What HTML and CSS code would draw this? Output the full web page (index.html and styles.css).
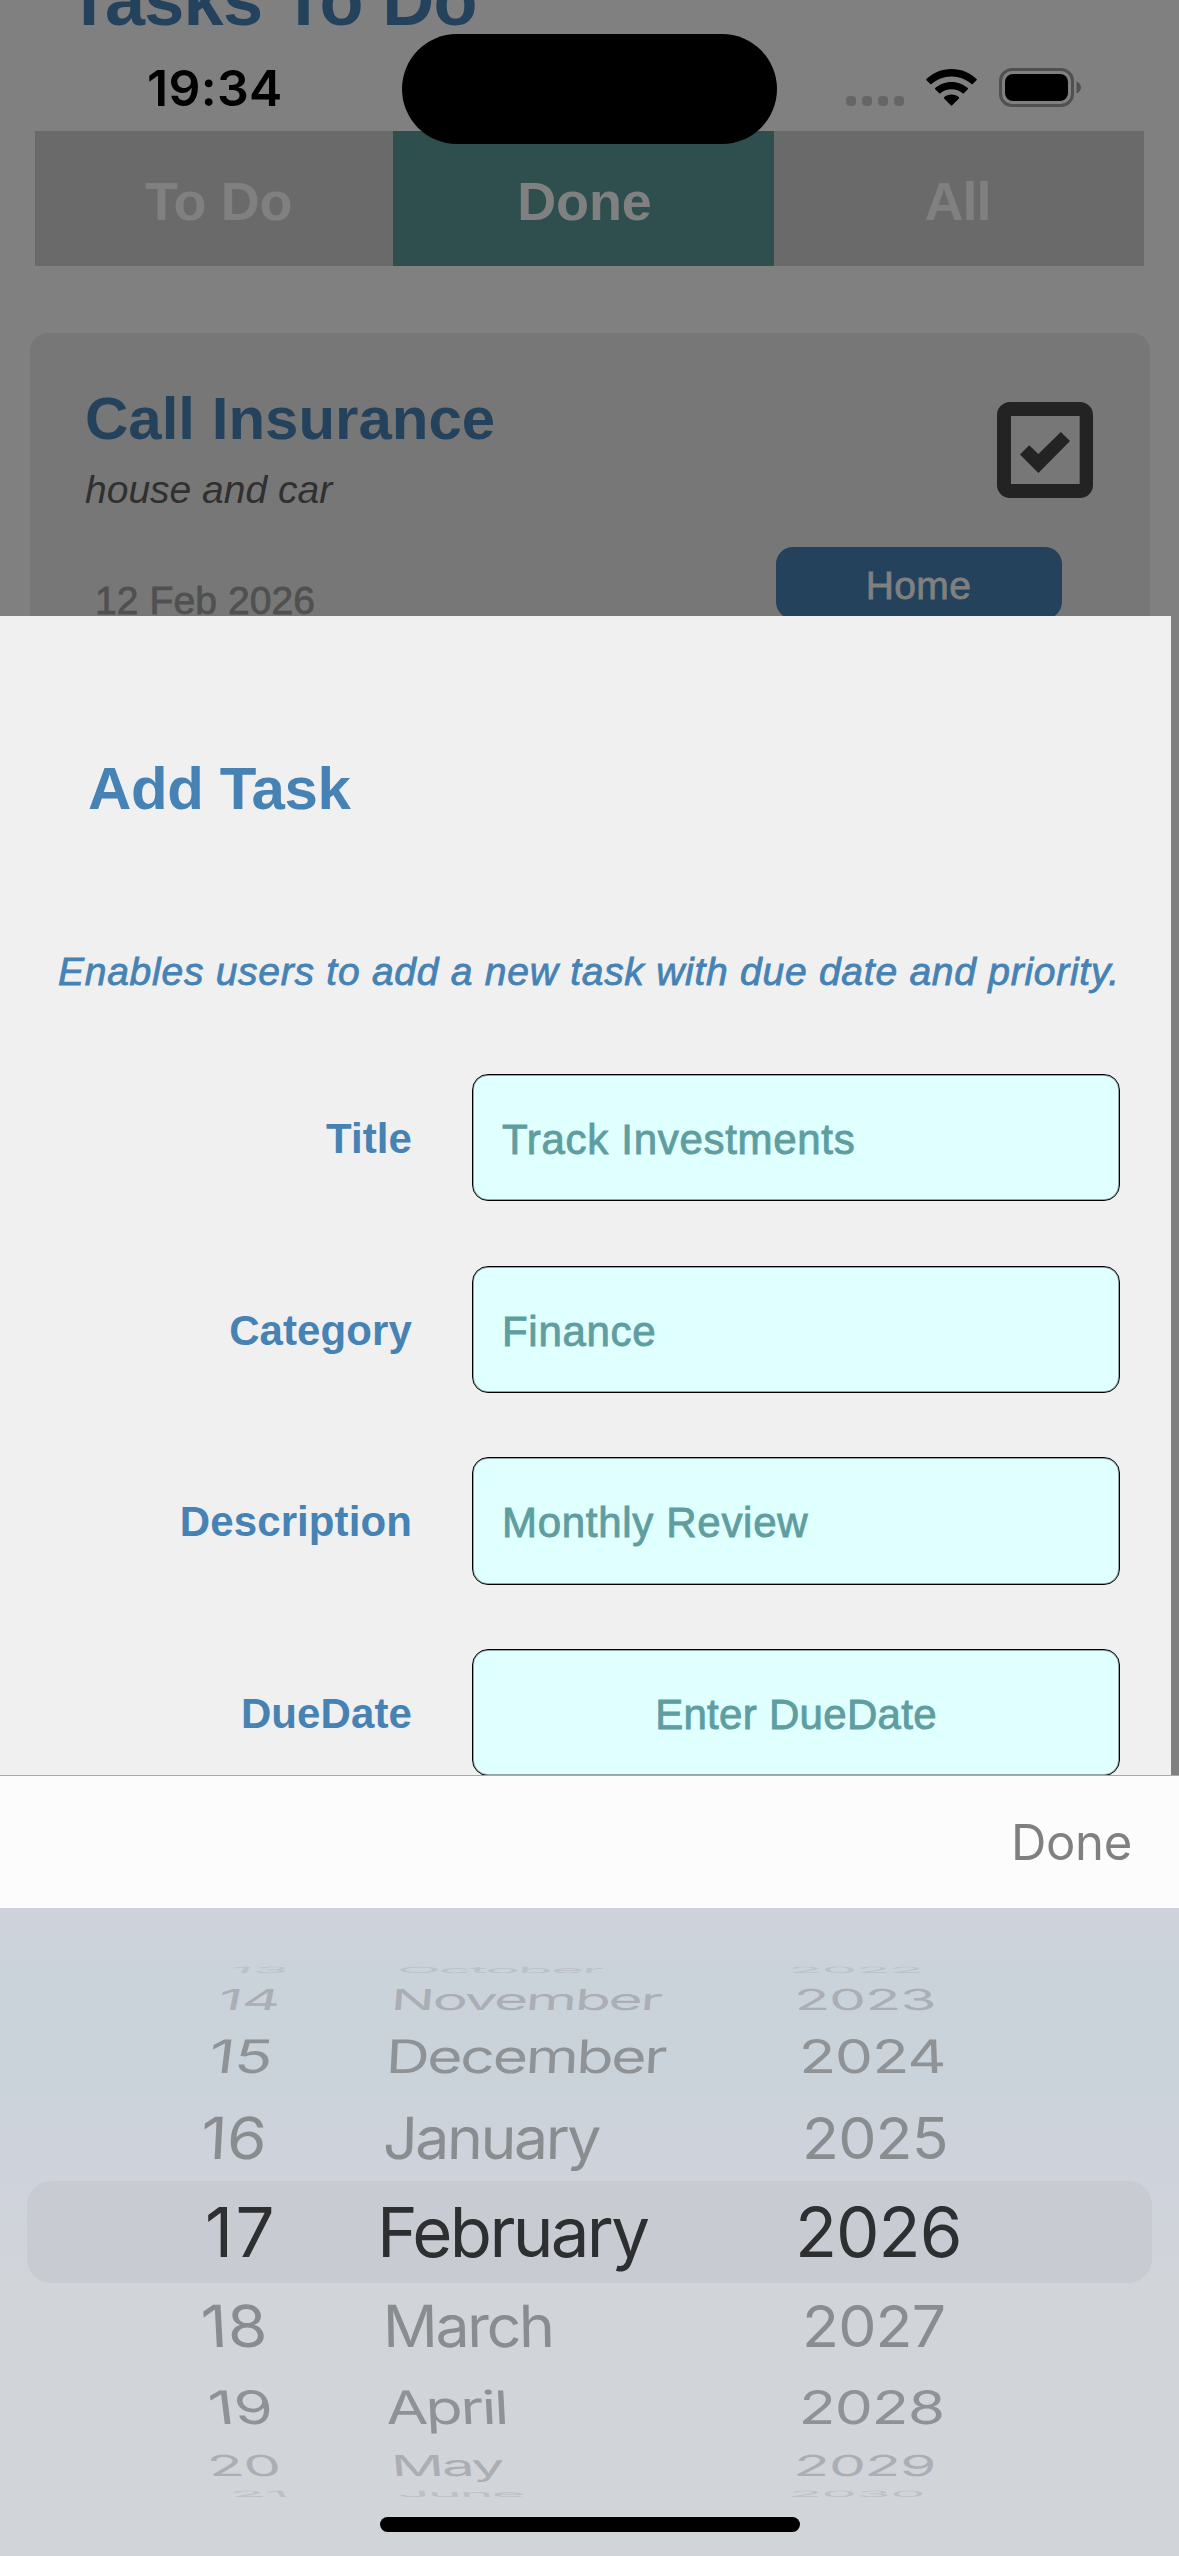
FILE: index.html
```html
<!DOCTYPE html>
<html lang="en">
<head>
<meta charset="utf-8">
<title>Add Task</title>
<link rel="stylesheet" href="styles.css">
</head>
<body>
<div class="screen">
  <header class="status">
    <span class="status-time">19:34</span>
    <span class="island"></span>
    <span class="status-icons">
      <span class="signal"><i></i><i></i><i></i><i></i></span>
      <svg class="wifi" width="51" height="37" viewBox="0 0 51 37">
        <path d="M25.5 0C35.500 0 44.500 3.900 50.600 10.100Q51.100 10.700 50.500 11.300L46.700 15.100Q46.200 15.600 45.600 15.100C40.400 10.400 33.400 7.500 25.500 7.500S10.600 10.400 5.400 15.100Q4.800 15.600 4.300 15.100L.5 11.300Q-.1 10.700.4 10.100C6.500 3.900 15.500 0 25.500 0Z"/>
        <path d="M25.500 12.900C32 12.900 37.600 15.300 41.800 19.100Q42.400 19.700 41.800 20.300L37.800 24.300Q37.200 24.800 36.600 24.300C33.600 21.800 29.800 20.300 25.500 20.300S17.400 21.800 14.400 24.300Q13.800 24.800 13.200 24.300L9.200 20.300Q8.600 19.700 9.200 19.100C13.400 15.300 19 12.900 25.500 12.900Z"/>
        <path d="M25.500 25.600C28.500 25.600 31 26.600 32.900 28.200Q33.500 28.800 32.900 29.400L26.200 36.200Q25.500 36.900 24.800 36.200L18.100 29.400Q17.500 28.800 18.100 28.200C20 26.600 22.500 25.600 25.500 25.600Z"/>
      </svg>
      <svg class="battery" width="82" height="39" viewBox="0 0 82 39">
        <rect x="1.500" y="1.500" width="72" height="36" rx="11.500" fill="none" stroke="#505050" stroke-width="3"/>
        <rect x="6" y="6" width="63" height="27" rx="8"/>
        <path d="M77.500 13.500C80.300 14.700 82 17 82 19.500S80.300 24.300 77.500 25.500Z" fill="#505050"/>
      </svg>
    </span>
  </header>

  <main class="tasks">
    <h1 class="tasks-title">Tasks To Do</h1>
    <nav class="tabs">
      <span class="tab tab-todo">To Do</span>
      <span class="tab tab-active">Done</span>
      <span class="tab tab-all">All</span>
    </nav>
    <article class="card">
      <div class="card-text">
        <h2 class="card-title">Call Insurance</h2>
        <p class="card-note">house and car</p>
        <p class="card-date">12 Feb 2026</p>
      </div>
      <div class="card-side">
        <svg class="check" width="96" height="96" viewBox="0 0 96 96">
          <path fill-rule="evenodd" d="M13 0H83A13 13 0 0 1 96 13V83A13 13 0 0 1 83 96H13A13 13 0 0 1 0 83V13A13 13 0 0 1 13 0ZM14 14V82H82.700V14Z"/>
          <path d="M23 52.500L32.200 43.300L41.400 52L63.800 30L73 39L41.400 71Z"/>
        </svg>
        <span class="tag">Home</span>
      </div>
    </article>
  </main>

  <section class="sheet">
    <h2 class="sheet-title">Add Task</h2>
    <p class="sheet-hint">Enables users to add a new task with due date and priority.</p>
    <div class="form">
      <div class="row"><span class="label">Title</span><span class="field">Track Investments</span></div>
      <div class="row"><span class="label">Category</span><span class="field">Finance</span></div>
      <div class="row"><span class="label">Description</span><span class="field">Monthly Review</span></div>
      <div class="row"><span class="label">DueDate</span><span class="field field-center">Enter DueDate</span></div>
    </div>
  </section>

  <div class="toolbar"><span class="toolbar-done">Done</span></div>

  <section class="picker">
    <div class="line up far4"><span class="day">13</span><span class="month">October</span><span class="year">2022</span></div>
    <div class="line up far3"><span class="day">14</span><span class="month">November</span><span class="year">2023</span></div>
    <div class="line up far2"><span class="day">15</span><span class="month">December</span><span class="year">2024</span></div>
    <div class="line up far1"><span class="day">16</span><span class="month">January</span><span class="year">2025</span></div>
    <div class="line current"><span class="day">17</span><span class="month">February</span><span class="year">2026</span></div>
    <div class="line down far1"><span class="day">18</span><span class="month">March</span><span class="year">2027</span></div>
    <div class="line down far2"><span class="day">19</span><span class="month">April</span><span class="year">2028</span></div>
    <div class="line down far3"><span class="day">20</span><span class="month">May</span><span class="year">2029</span></div>
    <div class="line down far4"><span class="day">21</span><span class="month">June</span><span class="year">2030</span></div>
  </section>
  <span class="home-bar"></span>
</div>
</body>
</html>
```
FILE: styles.css
```css
* { box-sizing: border-box; margin: 0; padding: 0; }
body { width: 1179px; background: #808080; font-family: "Liberation Sans", Arial, sans-serif; }
.screen { position: relative; width: 1179px; height: 2556px; overflow: hidden; background: #808080; }

/* status bar floats above the dimmed list */
.status { position: absolute; z-index: 2; top: 34px; left: 0; width: 1179px; height: 110px; display: grid; grid-template-columns: 402px 375px 402px; }
.status-time { padding-left: 147px; font: 600 50px/108px Inter, sans-serif; letter-spacing: 0.3px; color: #000; }
.island { background: #000; border-radius: 55px; }
.status-icons { display: flex; padding-left: 69px; }
.signal { display: flex; gap: 6px; padding-top: 62px; width: 80px; }
.signal i { width: 10px; height: 10px; border-radius: 4px; background: #666; }
.wifi { margin-top: 35px; }
.battery { margin: 34px 0 0 22px; }

.tasks { height: 616px; overflow: hidden; display: flow-root; }
.tasks-title { margin: -40px 0 91px; padding-left: 67px; font-size: 72px; line-height: 80px; letter-spacing: -0.7px; color: #24425c; }
.tabs { display: grid; grid-template-columns: 358px 381px 370px; margin-left: 35px; height: 135px; }
.tab { padding-top: 6px; background: #6a6a6a; color: #808080; font-size: 54px; font-weight: 700; line-height: 129px; text-align: center; }
.tab-todo { padding-left: 9px; letter-spacing: -0.4px; }
.tab-active { background: #2f4f4f; padding-left: 2px; letter-spacing: -0.1px; }
.tab-all { padding-right: 3px; letter-spacing: -1px; }

.card { display: flex; justify-content: space-between; margin: 67px 29.5px 0; height: 300px; border-radius: 18px; background: #777; }
.card-text { padding: 51px 0 0 55.500px; }
.card-title { font-size: 60px; line-height: 70px; color: #24425c; }
.card-note { margin-top: 13px; font-size: 39px; line-height: 46px; font-style: italic; color: #303030; }
.card-date { margin-top: 65px; padding-left: 10px; font-size: 39px; line-height: 46px; letter-spacing: 0.1px; color: #505050; -webkit-text-stroke: 0.8px #505050; }
.card-side { display: flex; flex-direction: column; align-items: flex-end; padding-top: 69px; }
.check { margin-right: 56.500px; fill: #232323; }
.tag { margin: 49px 88px 0 0; width: 286px; height: 72px; padding-top: 5px; border-radius: 17px; background: #24425c; color: #808080; font-size: 39px; line-height: 67px; letter-spacing: 0.4px; text-align: center; -webkit-text-stroke: 0.8px #808080; }

.sheet { width: 1171px; height: 1159px; overflow: hidden; padding-top: 138px; background: #f0f0f0; }
.sheet-title { padding-left: 88px; font-size: 60px; line-height: 70px; letter-spacing: -0.4px; color: #4682b4; }
.sheet-hint { margin-top: 125px; padding-left: 58px; font-size: 39px; line-height: 46px; font-style: italic; letter-spacing: 0.74px; white-space: nowrap; color: #4682b4; -webkit-text-stroke: 0.8px #4682b4; }
.form { display: flex; flex-direction: column; gap: 64.370px; margin-top: 79px; }
.row { display: grid; grid-template-columns: 412px 648px; grid-template-rows: 127.300px; column-gap: 60px; height: 127.300px; flex: none; }
.label { padding-top: 3px; font-size: 42px; font-weight: 700; line-height: 124px; letter-spacing: 0.1px; text-align: right; color: #4682b4; }
.field { padding: 3px 29px 0; border: 1px solid #000; border-radius: 16px; box-shadow: inset 0 0 0 1px rgba(0, 0, 0, 0.35); background: #e0ffff; color: #5f9ea0; font-size: 42px; line-height: 123px; letter-spacing: 0.7px; -webkit-text-stroke: 0.9px #5f9ea0; }
.field-center { text-align: center; letter-spacing: 0.3px; }

.toolbar { display: flex; justify-content: flex-end; height: 133px; padding-right: 47px; border-top: 1px solid #a8a8a8; background: #fcfcfc; }
.toolbar-done { font: 400 49px/134px Inter, sans-serif; letter-spacing: -0.3px; color: #808080; }

.picker { height: 648px; padding-top: 51.500px; background: linear-gradient(#ced2db 0, #cbd3da 60px, #cbd3da 180px, #ced2db 240px, #d1d4d9 370px); }
.line { display: grid; grid-template-columns: 277px 518px 300px; margin-right: 27px; font: 400 69px Inter, sans-serif; white-space: nowrap; }
.day, .month, .year { line-height: inherit; }
.day { text-align: right; transform-origin: 100% 50%; }
.month { padding-left: 101px; letter-spacing: -2.700px; transform-origin: 101px 50%; }
.year { transform-origin: 0 50%; letter-spacing: -1px; }
.current { height: 102px; line-height: 102px; margin: 0 27px; grid-template-columns: 250px 518px 300px; border-radius: 24px; background: #c9cbd3; color: #2d2f31; }
.current .day { letter-spacing: 2.500px; }
.current .month { padding-left: 100px; }
.far1 { height: 86px; line-height: 86px; color: #8a8d90; }
.far2 { height: 77px; line-height: 77px; color: #8f9396; }
.far3 { height: 38px; line-height: 38px; color: #abafb5; }
.far4 { height: 20px; line-height: 20px; color: #bcc1c6; }

/* wheel foreshortening, per distance from the selected row */
.far1 .day { transform: translateX(-10px) skewX(calc(var(--s) * -3deg)) scale(0.93, 0.84); }
.far2 .day { transform: translateX(-4px) skewX(calc(var(--s) * -7deg)) scale(0.91, 0.667); }
.far3 .day { transform: translateX(4px) skewX(calc(var(--s) * -11deg)) scale(0.86, 0.42); }
.far4 .day { transform: translateX(12px) skewX(calc(var(--s) * -30deg)) scale(0.84, 0.125); }
.far1 .month { transform: translateX(5px) skewX(calc(var(--s) * -1deg)) scale(0.88, 0.84); }
.far2 .month { transform: translateX(8px) skewX(calc(var(--s) * -3deg)) scale(0.88, 0.667); }
.far3 .month { transform: translateX(13px) skewX(calc(var(--s) * -5deg)) scale(0.85, 0.42); }
.far4 .month { transform: translateX(19px) skewX(calc(var(--s) * -12deg)) scale(0.835, 0.125); }
.far1 .year { transform: translateX(7px) scale(0.88, 0.84); }
.far2 .year { transform: translateX(4px) skewX(calc(var(--s) * 2deg)) scale(0.875, 0.667); }
.far3 .year { transform: translateX(-1px) skewX(calc(var(--s) * 4deg)) scale(0.85, 0.42); }
.far4 .year { transform: translateX(-7px) skewX(calc(var(--s) * 12deg)) scale(0.815, 0.125); }
.up { --s: 1; }
.down { --s: -1; }

.home-bar { position: absolute; left: 380px; top: 2517px; width: 420px; height: 15px; border-radius: 8px; background: #000; }
```
